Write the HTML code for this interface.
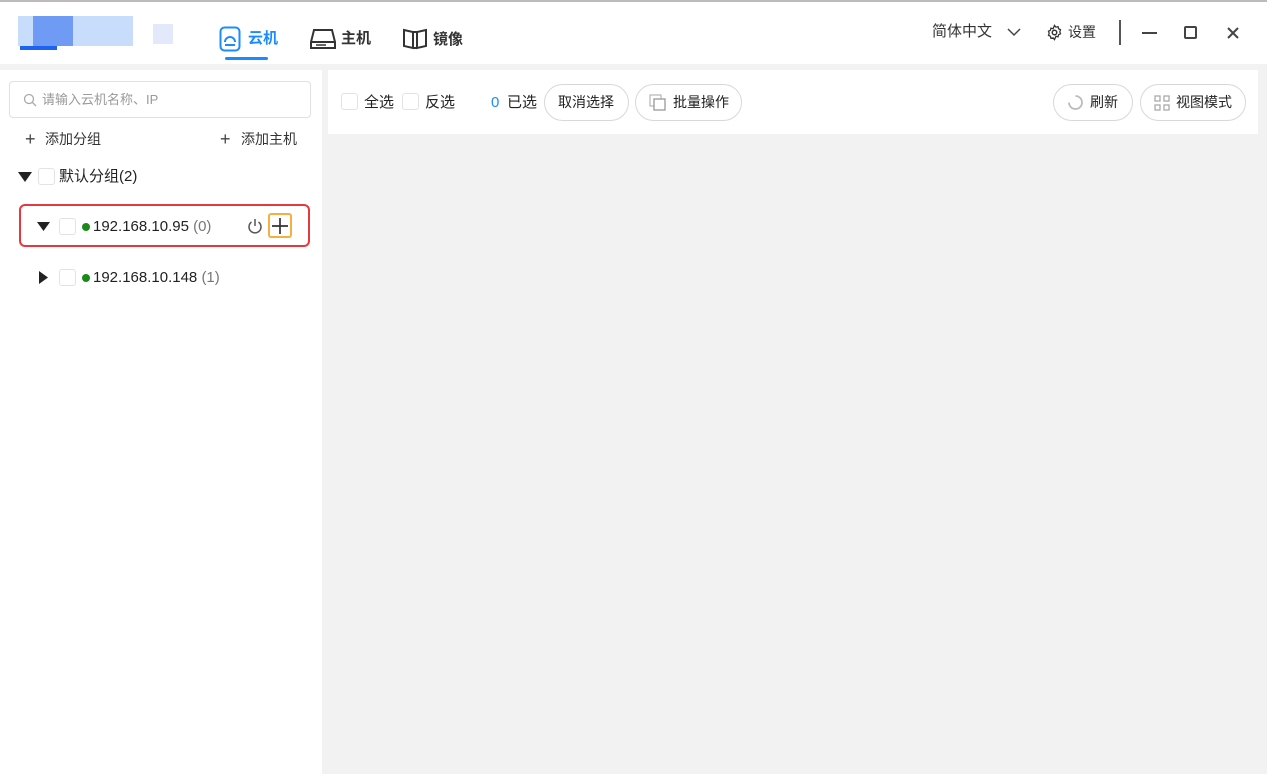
<!DOCTYPE html><html><head><meta charset="utf-8"><style>
*{margin:0;padding:0;box-sizing:border-box}
body{width:1267px;height:774px;background:#f2f2f2;font-family:"Liberation Sans","Noto Sans CJK SC",sans-serif;color:#222;position:relative;overflow:hidden;font-size:14px;line-height:1.2}
.a{position:absolute;white-space:nowrap}
.top{left:0;top:0;width:1267px;height:64px;background:#fff;border-top:2px solid #bbb}
.left{left:0;top:70px;width:322px;height:704px;background:#fff}
.tb{left:328px;top:70px;width:930px;height:64px;background:#fff}
.cb{position:absolute;width:17px;height:17px;border:1px solid #e2e2e8;border-radius:3px;background:#fff}
.btn{position:absolute;height:37px;border:1.5px solid #d8d8d8;border-radius:19px;top:84px;font-size:14px;line-height:35px;padding:0 0 0 13px;background:#fff;white-space:nowrap}
.dot{position:absolute;width:8px;height:8px;border-radius:50%;background:#1a8a1a}
</style></head><body>
<div class="a top">
 <div class="a" style="left:18px;top:14px;width:115px;height:30px;background:#c8ddfc"></div>
 <div class="a" style="left:33px;top:14px;width:40px;height:30px;background:#6f9bf5"></div>
 <div class="a" style="left:20px;top:44px;width:37px;height:4px;background:#1d62f0"></div>
 <div class="a" style="left:153px;top:22px;width:20px;height:20px;background:#e4e8fb"></div>
 <svg class="a" style="left:219px;top:24px" width="22" height="26" viewBox="0 0 22 26"><rect x="1.5" y="1.5" width="19" height="23" rx="4" fill="none" stroke="#1a8cff" stroke-width="2"/><path d="M6 16a5 5 0 0 1 10 0" fill="none" stroke="#1a8cff" stroke-width="2"/><path d="M6 19h10" stroke="#1a8cff" stroke-width="2"/></svg>
 <div class="a" style="left:248px;top:28px;font-size:15px;font-weight:bold;color:#1a8cff">云机</div>
 <div class="a" style="left:225px;top:55px;width:43px;height:3px;border-radius:2px;background:#1a8cff"></div>
 <svg class="a" style="left:310px;top:26px" width="26" height="22" viewBox="0 0 26 22"><path d="M4 2h18l3 12v6H1v-6z M1 14h24" fill="none" stroke="#333" stroke-width="2"/><path d="M6 17h10" stroke="#333" stroke-width="1.5"/></svg>
 <div class="a" style="left:341px;top:28px;font-size:15px;font-weight:bold;color:#333">主机</div>
 <svg class="a" style="left:402px;top:26px" width="26" height="22" viewBox="0 0 26 22"><path d="M2 2l9 2v16l-9-2z M24 2l-9 2v16l9-2z M11 4h4 M11 20h4" fill="none" stroke="#333" stroke-width="2"/></svg>
 <div class="a" style="left:433px;top:29px;font-size:15px;font-weight:bold;color:#333">镜像</div>
 <div class="a" style="left:932px;top:21px;font-size:15px;color:#333">简体中文</div>
 <svg class="a" style="left:1007px;top:26px" width="14" height="9"><path d="M1 1l6 6 6-6" fill="none" stroke="#444" stroke-width="1.5"/></svg>
 <svg class="a" style="left:1046px;top:22px" width="17" height="17" viewBox="0 0 24 24"><circle cx="12" cy="12" r="3.2" fill="none" stroke="#333" stroke-width="2"/><path d="M12 2l2 2.5 3-.8.8 3 2.7 1.3-1 2.9 1 2.9-2.7 1.3-.8 3-3-.8L12 22l-2-2.5-3 .8-.8-3L3.5 16l1-2.9-1-2.9 2.7-1.3.8-3 3 .8z" fill="none" stroke="#333" stroke-width="1.8"/></svg>
 <div class="a" style="left:1068px;top:22px;font-size:14px;color:#333">设置</div>
 <div class="a" style="left:1119px;top:18px;width:2px;height:25px;background:#555"></div>
 <div class="a" style="left:1142px;top:30px;width:15px;height:2px;background:#444"></div>
 <div class="a" style="left:1184px;top:24px;width:13px;height:13px;border:2px solid #444;border-radius:2px"></div>
 <svg class="a" style="left:1227px;top:25px" width="12" height="12"><path d="M1 1l10 10M11 1L1 11" stroke="#444" stroke-width="2"/></svg>
</div>
<div class="a left">
 <div class="a" style="left:9px;top:11px;width:302px;height:37px;border:1.5px solid #e0e0e0;border-radius:4px"></div>
 <svg class="a" style="left:23px;top:23px" width="14" height="14"><circle cx="6" cy="6" r="4.5" fill="none" stroke="#aaa" stroke-width="1.3"/><path d="M9.5 9.5l3.5 3.5" stroke="#aaa" stroke-width="1.3"/></svg>
 <div class="a" style="left:42px;top:22px;font-size:13px;color:#999">请输入云机名称、IP</div>
 <div class="a" style="left:25px;top:59px;font-size:18px;color:#444;line-height:20px">+</div>
 <div class="a" style="left:45px;top:61px;font-size:14px;color:#333">添加分组</div>
 <div class="a" style="left:220px;top:59px;font-size:18px;color:#444;line-height:20px">+</div>
 <div class="a" style="left:241px;top:61px;font-size:14px;color:#333">添加主机</div>
 <svg class="a" style="left:18px;top:102px" width="14" height="10"><path d="M0 0h14L7 10z" fill="#222"/></svg>
 <div class="cb" style="left:38px;top:98px"></div>
 <div class="a" style="left:59px;top:98px;font-size:15px;color:#222">默认分组(2)</div>
 <div class="a" style="left:19px;top:134px;width:291px;height:43px;border:2px solid #e8383d;border-radius:6px"></div>
 <svg class="a" style="left:37px;top:152px" width="13" height="9"><path d="M0 0h13L6.5 9z" fill="#222"/></svg>
 <div class="cb" style="left:59px;top:148px"></div>
 <div class="dot" style="left:82px;top:153px"></div>
 <div class="a" style="left:93px;top:148px;font-size:15px;color:#222">192.168.10.95 <span style="color:#777">(0)</span></div>
 <svg class="a" style="left:246px;top:147px" width="18" height="18"><path d="M5.5 5a6 6 0 1 0 7 0" fill="none" stroke="#555" stroke-width="1.5"/><path d="M9 2v7" stroke="#555" stroke-width="1.5"/></svg>
 <div class="a" style="left:268px;top:143px;width:24px;height:25px;border:2px solid #f5b041;border-radius:3px"></div>
 <svg class="a" style="left:272px;top:148px" width="16" height="16"><path d="M8 0v16M0 8h16" stroke="#333" stroke-width="1.7"/></svg>
 <svg class="a" style="left:39px;top:201px" width="9" height="13"><path d="M0 0v13l9-6.5z" fill="#222"/></svg>
 <div class="cb" style="left:59px;top:199px"></div>
 <div class="dot" style="left:82px;top:204px"></div>
 <div class="a" style="left:93px;top:199px;font-size:15px;color:#222">192.168.10.148 <span style="color:#777">(1)</span></div>
</div>
<div class="a tb"></div>
<div class="cb" style="left:341px;top:93px"></div>
<div class="a" style="left:364px;top:94px;font-size:15px">全选</div>
<div class="cb" style="left:402px;top:93px"></div>
<div class="a" style="left:425px;top:94px;font-size:15px">反选</div>
<div class="a" style="left:491px;top:94px;font-size:15px;color:#1a8cff">0</div>
<div class="a" style="left:507px;top:94px;font-size:15px">已选</div>
<div class="btn" style="left:544px;width:85px">取消选择</div>
<div class="btn" style="left:635px;width:107px;padding-left:37px">批量操作</div>
<svg class="a" style="left:649px;top:94px" width="18" height="17"><rect x="1" y="1" width="11" height="11" fill="none" stroke="#bbb" stroke-width="1.3"/><rect x="5" y="5" width="11" height="11" fill="#fff" stroke="#999" stroke-width="1.3"/></svg>
<div class="btn" style="left:1053px;width:80px;padding-left:36px">刷新</div>
<svg class="a" style="left:1067px;top:94px" width="17" height="17"><path d="M8.5 2a6.5 6.5 0 0 1 6.5 6.5M15 8.5a6.5 6.5 0 0 1-6.5 6.5M8.5 15A6.5 6.5 0 0 1 2 8.5" fill="none" stroke="#bbb" stroke-width="1.8"/></svg>
<div class="btn" style="left:1140px;width:106px;padding-left:35px">视图模式</div>
<svg class="a" style="left:1154px;top:95px" width="16" height="16"><g fill="none" stroke="#aaa" stroke-width="1.3"><rect x="1" y="1" width="5" height="5"/><rect x="10" y="1" width="5" height="5"/><rect x="1" y="10" width="5" height="5"/><rect x="10" y="10" width="5" height="5"/></g></svg>
</body></html>
